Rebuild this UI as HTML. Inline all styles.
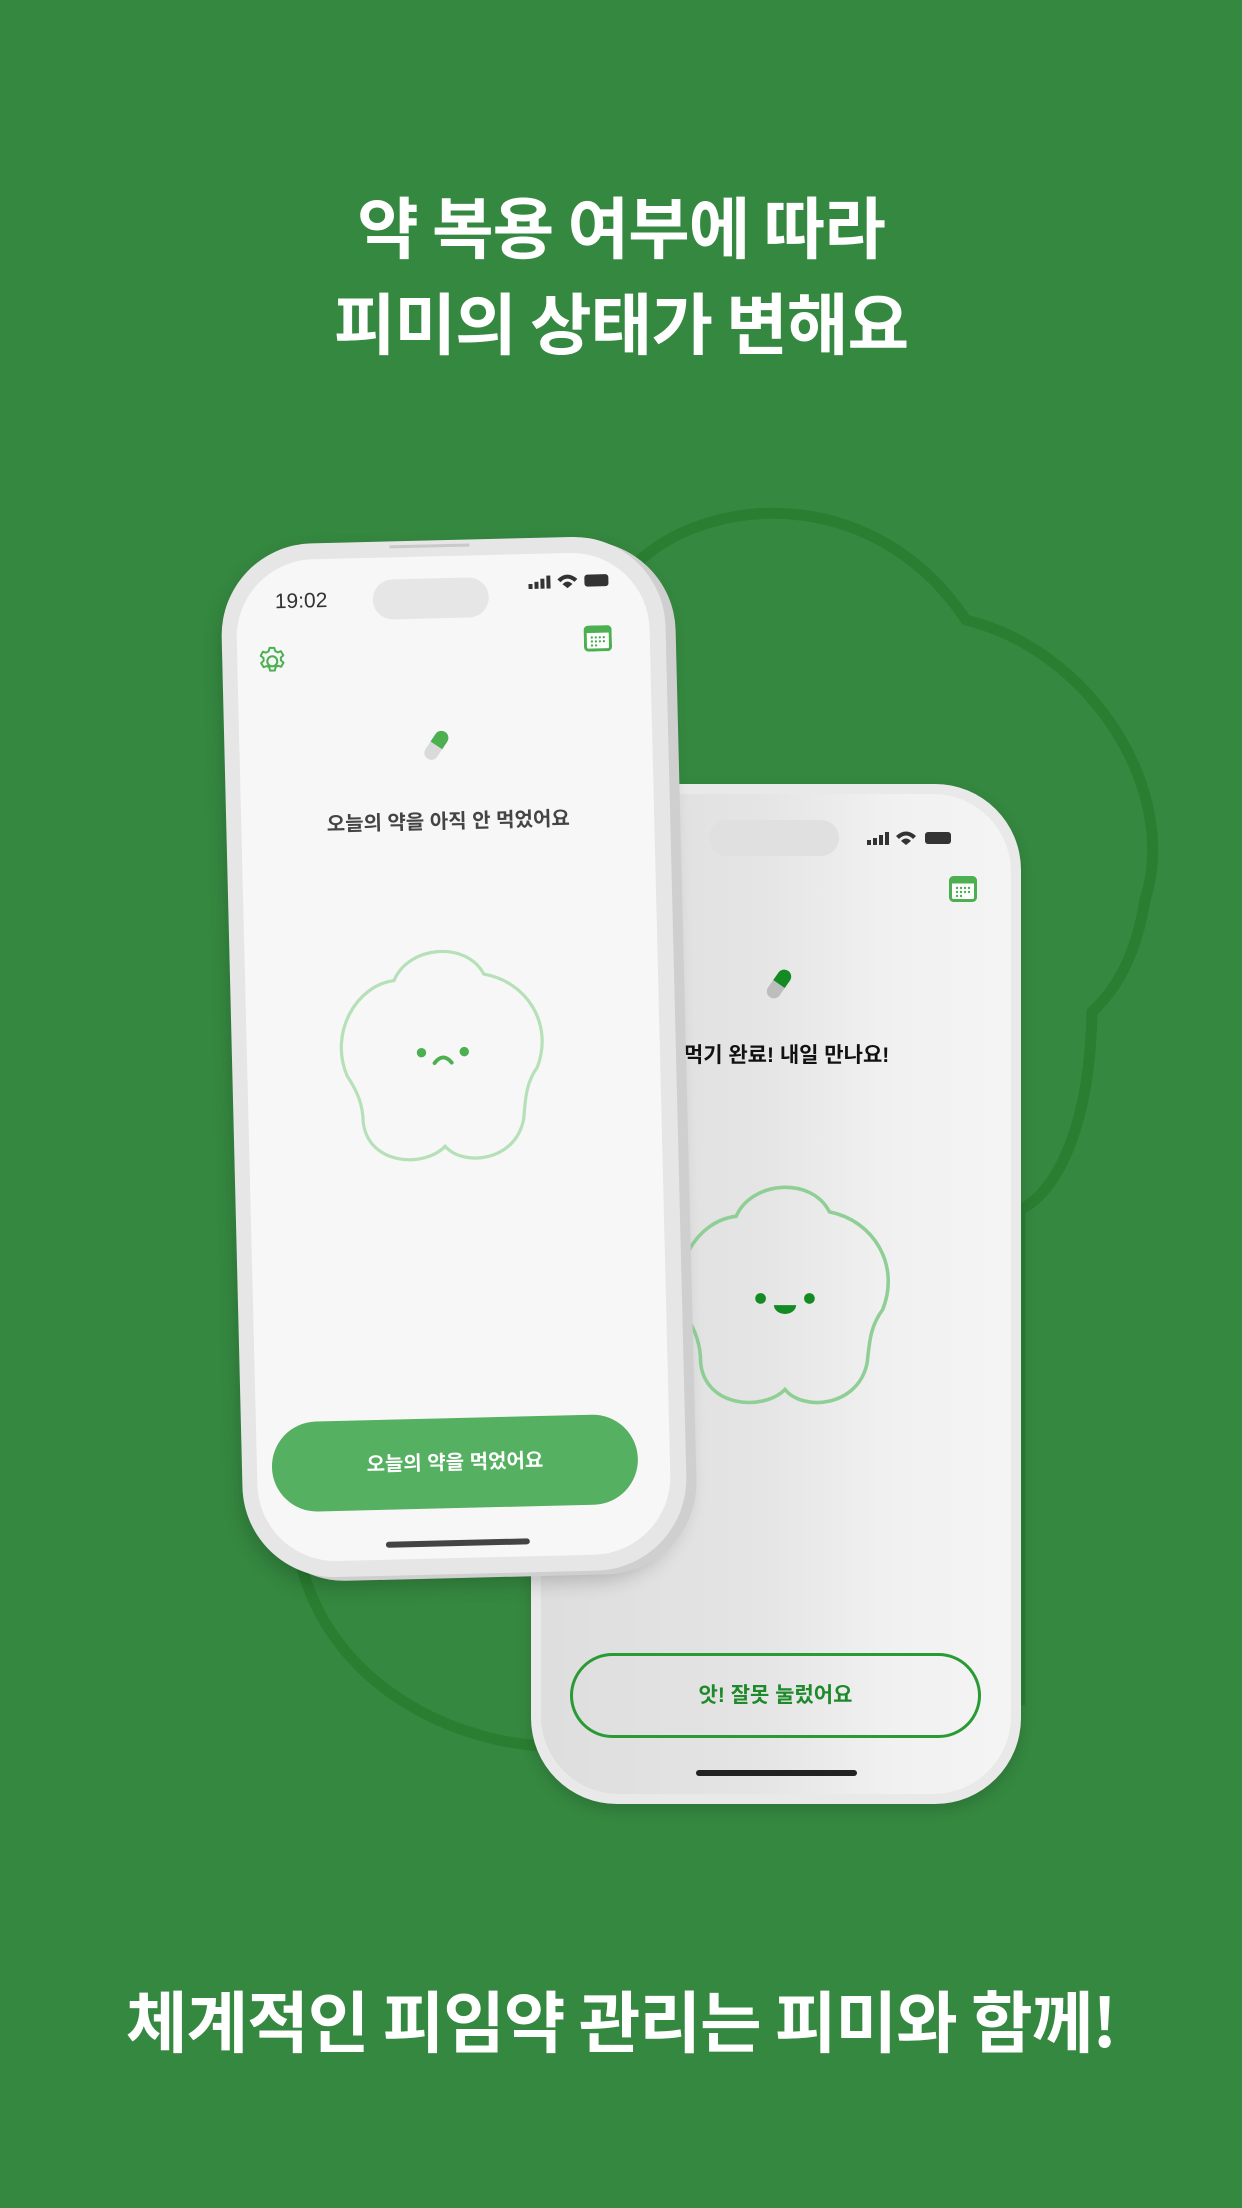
<!DOCTYPE html>
<html><head><meta charset="utf-8"><style>
*{margin:0;padding:0;box-sizing:border-box}
body{width:1242px;height:2208px;background:#358840;position:relative;overflow:hidden;font-family:"Liberation Sans","Noto Sans CJK KR",sans-serif}
.h{position:absolute;left:0;width:1242px;text-align:center;color:#fff;font-weight:700;font-family:"Noto Sans CJK KR",sans-serif}
.abs{position:absolute}
</style></head><body>
<div class="h" style="top:178px;font-size:67px;line-height:94px;letter-spacing:-1px">약 복용 여부에 따라</div>
<div class="h" style="top:274px;font-size:67px;line-height:94px;letter-spacing:-1px">피미의 상태가 변해요</div>
<div class="h" style="top:1972px;font-size:67px;line-height:94px;letter-spacing:-1px">체계적인 피임약 관리는 피미와 함께!</div>

<svg class="abs" style="left:0;top:0" width="1242" height="2208">
<path d="M640,560 C720,490 880,490 966,620 C1090,650 1180,790 1145,900 C1135,960 1115,990 1092,1012 C1090,1120 1060,1190 1020,1210 L1020,1700 L600,1745 C470,1760 330,1690 300,1560 C280,1480 290,1420 320,1370 L520,1200 Z" fill="none" stroke="#2a7e32" stroke-width="11"/>
</svg>

<!-- right phone -->
<div class="abs" style="left:531px;top:784px;width:490px;height:1020px;border-radius:86px;background:#e9e9e9;box-shadow:0 6px 14px rgba(0,0,0,.15)">
 <div class="abs" style="left:10px;top:10px;right:10px;bottom:10px;border-radius:78px;background:linear-gradient(90deg,#dedede 0%,#e4e4e4 45%,#f1f1f1 75%,#f4f4f4 100%)"></div>
 <div class="abs" style="left:178px;top:36px;width:130px;height:36px;border-radius:18px;background:#e0e0e0"></div>
 <div class="abs" style="left:330px;top:44px;color:#333;font-size:18px">
  <svg width="90" height="20"><g fill="#333"><rect x="6" y="12" width="4" height="5"/><rect x="12" y="10" width="4" height="7"/><rect x="18" y="7" width="4" height="10"/><rect x="24" y="4" width="4" height="13"/><path d="M35,8 Q45,-1 55,8 L52,11 Q45,4 38,11Z M40,13 Q45,8 50,13 L45,17Z"/><rect x="64" y="4" width="26" height="12" rx="3"/></g></svg>
 </div>
 <svg class="abs" style="left:418px;top:92px" width="28" height="26"><rect x="1.5" y="1.5" width="25" height="23" rx="3" fill="#fff" stroke="#4caf50" stroke-width="3"/><rect x="1.5" y="1.5" width="25" height="6" fill="#4caf50"/><g fill="#4caf50"><circle cx="8" cy="12" r="1.2"/><circle cx="12" cy="12" r="1.2"/><circle cx="16" cy="12" r="1.2"/><circle cx="20" cy="12" r="1.2"/><circle cx="8" cy="16" r="1.2"/><circle cx="12" cy="16" r="1.2"/><circle cx="16" cy="16" r="1.2"/><circle cx="20" cy="16" r="1.2"/><circle cx="8" cy="20" r="1.2"/><circle cx="12" cy="20" r="1.2"/></g></svg>
 <svg class="abs" style="left:232px;top:180px" width="32" height="40"><g transform="rotate(35 16 20)"><rect x="9" y="4" width="14" height="32" rx="7" fill="#bdbdbd"/><path d="M9,20 L9,11 A7,7 0 0 1 23,11 L23,20Z" fill="#138a22"/></g></svg>
 <div class="abs" style="left:0;width:486px;top:255px;text-align:center;font-size:21px;font-weight:700;color:#111">약 먹기 완료! 내일 만나요!</div>
 <svg class="abs" style="left:143px;top:392px" width="222" height="236" viewBox="0 0 100 106"><path d="M28,18 C35,2 62,0 70,16 C90,20 102,40 94,60 C88,68 88,76 87,84 C83,104 58,106 50,96 C40,106 14,104 12,84 C12,76 10,70 5,62 C-3,42 10,20 28,18 Z" fill="none" stroke="#8fcf95" stroke-width="1.6"/><circle cx="39" cy="55" r="2.4" fill="#138a22"/><circle cx="61" cy="55" r="2.4" fill="#138a22"/><path d="M45,58 L55,58 A5,4 0 0 1 45,58Z" fill="#138a22"/></svg>
 <div class="abs" style="left:39px;top:869px;width:411px;height:85px;border:3px solid #2a9a35;border-radius:43px;text-align:center;line-height:79px;color:#1e8a2a;font-weight:700;font-size:21px">앗! 잘못 눌렀어요</div>
 <div class="abs" style="left:165px;top:986px;width:161px;height:6px;border-radius:3px;background:#222"></div>
</div>

<!-- left phone -->
<div class="abs" style="left:232px;top:540px;width:444px;height:1034px;transform:rotate(-1.4deg);border-radius:92px;background:#e6e6e6;box-shadow:10px 4px 0 #cfcfcf,0 10px 20px rgba(0,0,0,.2)">
 <div class="abs" style="left:15px;top:16px;right:16px;bottom:16px;border-radius:78px;background:#f7f7f7"></div>
 <div class="abs" style="left:170px;top:4px;width:80px;height:3px;background:#c9c9c9"></div>
 <div class="abs" style="left:54px;top:46px;font-size:21px;color:#333">19:02</div>
 <div class="abs" style="left:152px;top:38px;width:116px;height:40px;border-radius:20px;background:#e6e6e6"></div>
 <svg class="abs" style="left:302px;top:34px" width="90" height="20"><g fill="#333"><rect x="6" y="12" width="4" height="5"/><rect x="12" y="10" width="4" height="7"/><rect x="18" y="7" width="4" height="10"/><rect x="24" y="4" width="4" height="13"/><path d="M35,8 Q45,-1 55,8 L52,11 Q45,4 38,11Z M40,13 Q45,8 50,13 L45,17Z"/><rect x="62" y="4" width="24" height="12" rx="3"/></g></svg>
 <svg class="abs" style="left:33px;top:100px" width="34" height="34" viewBox="0 0 24 24"><path d="M12,8.5 A3.5,3.5 0 1 0 12.01,8.5Z" fill="none" stroke="#4caf50" stroke-width="1.5"/><path d="M10.3,2.5 h3.4 l.5,2.3 1.8,1 2.2-.8 1.7,2.9-1.8,1.6v2l1.8,1.6-1.7,2.9-2.2-.8-1.8,1-.5,2.3h-3.4l-.5-2.3-1.8-1-2.2.8-1.7-2.9 1.8-1.6v-2L3.9,7.9 5.6,5l2.2.8 1.8-1Z" fill="none" stroke="#4caf50" stroke-width="1.4" stroke-linejoin="round"/></svg>
 <svg class="abs" style="left:362px;top:89px" width="28" height="26"><rect x="1.5" y="1.5" width="25" height="23" rx="3" fill="#fff" stroke="#4caf50" stroke-width="3"/><rect x="1.5" y="1.5" width="25" height="6" fill="#4caf50"/><g fill="#4caf50"><circle cx="8" cy="12" r="1.2"/><circle cx="12" cy="12" r="1.2"/><circle cx="16" cy="12" r="1.2"/><circle cx="20" cy="12" r="1.2"/><circle cx="8" cy="16" r="1.2"/><circle cx="12" cy="16" r="1.2"/><circle cx="16" cy="16" r="1.2"/><circle cx="20" cy="16" r="1.2"/><circle cx="8" cy="20" r="1.2"/><circle cx="12" cy="20" r="1.2"/></g></svg>
 <svg class="abs" style="left:196px;top:185px" width="32" height="40"><g transform="rotate(35 16 20)"><rect x="9" y="4" width="14" height="32" rx="7" fill="#dadada"/><path d="M9,20 L9,11 A7,7 0 0 1 23,11 L23,20Z" fill="#4caf50"/></g></svg>
 <div class="abs" style="left:0;width:444px;top:265px;text-align:center;font-size:20px;font-weight:700;color:#444">오늘의 약을 아직 안 먹었어요</div>
 <svg class="abs" style="left:104px;top:392px" width="214" height="244" viewBox="0 0 100 106"><path d="M28,18 C35,2 62,0 70,16 C90,20 102,40 94,60 C88,68 88,76 87,84 C83,104 58,106 50,96 C40,106 14,104 12,84 C12,76 10,70 5,62 C-3,42 10,20 28,18 Z" fill="none" stroke="#b5e0b8" stroke-width="1.5"/><circle cx="40" cy="52" r="2.2" fill="#4caf50"/><circle cx="60" cy="52" r="2.2" fill="#4caf50"/><path d="M46,57 Q50,52 54,57" fill="none" stroke="#4caf50" stroke-width="1.8" stroke-linecap="round"/></svg>
 <div class="abs" style="left:30px;top:878px;width:366px;height:90px;border-radius:45px;background:#55b061;text-align:center;line-height:90px;color:#fff;font-weight:700;font-size:20px">오늘의 약을 먹었어요</div>
 <div class="abs" style="left:142px;top:1000px;width:144px;height:6px;border-radius:3px;background:#444"></div>
</div>
</body></html>
